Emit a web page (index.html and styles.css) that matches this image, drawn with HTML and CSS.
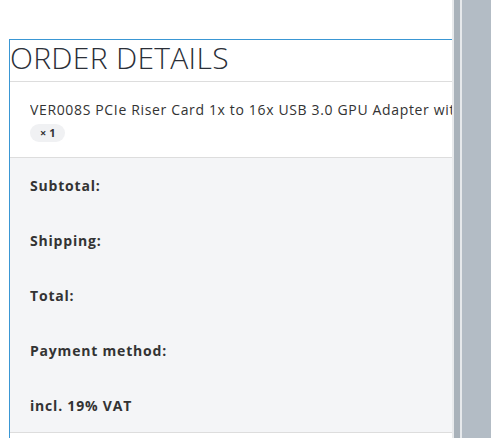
FILE: index.html
```html
<!DOCTYPE html>
<html>
<head>
<meta charset="utf-8">
<link rel="stylesheet" href="styles.css">
</head>
<body>
<div class="page">
  <div class="main">
    <section class="order">
      <h2 class="title">ORDER DETAILS</h2>
      <div class="item">
        <div class="item-name">VER008S PCIe Riser Card 1x to 16x USB 3.0 GPU Adapter with</div>
        <span class="qty">× 1</span>
      </div>
      <div class="totals">
        <div class="row">Subtotal:</div>
        <div class="row">Shipping:</div>
        <div class="row">Total:</div>
        <div class="row">Payment method:</div>
        <div class="row">incl. 19% VAT</div>
      </div>
    </section>
  </div>
  <div class="gutter">
    <div class="g1"></div>
    <div class="g2"></div>
    <div class="g3"></div>
    <div class="g4"></div>
  </div>
</div>
</body>
</html>
```
FILE: styles.css
```css
html, body {
  margin: 0;
  padding: 0;
  height: 100%;
  background: #fff;
}
body {
  font-family: "Open Sans", "DejaVu Sans", sans-serif;
  color: #333;
}
.page {
  display: flex;
  height: 438px;
  overflow: hidden;
}
.main {
  width: 452px;
  flex: none;
  padding: 39px 0 0 9px;
  box-sizing: border-box;
  overflow: hidden;
}
.order {
  border-top: 1px solid #3a97d4;
  border-left: 1px solid #3a97d4;
  height: 420px;
}
.title {
  margin: 0;
  height: 42px;
  box-sizing: border-box;
  padding-bottom: 7px;
  font-weight: 300;
  font-size: 30px;
  line-height: 35px;
  letter-spacing: 0.3px;
  color: #2b2f38;
  border-bottom: 1px solid #ddd;
  white-space: nowrap;
}
.item {
  height: 76px;
  box-sizing: border-box;
  padding: 18px 0 0 20px;
  border-bottom: 1px solid #ddd;
}
.item-name {
  font-size: 14px;
  line-height: 20px;
  letter-spacing: 0.65px;
  white-space: nowrap;
  overflow: hidden;
  color: #333;
}
.qty {
  display: inline-block;
  height: 18px;
  line-height: 18px;
  padding: 0 10px;
  border-radius: 9px;
  background: #f0f1f3;
  font-size: 11px;
  font-weight: 700;
  color: #333;
}
.totals {
  background: #f4f5f7;
  height: 275px;
  border-bottom: 1px solid #ddd;
  padding: 18px 0 0 20px;
  box-sizing: border-box;
}
.row {
  height: 55px;
  font-size: 14px;
  font-weight: 700;
  line-height: 20px;
  letter-spacing: 0.8px;
  color: #333;
}
.gutter {
  flex: 1;
  display: flex;
}
.g1 { width: 2px; background: #e8eaec; }
.g2 { width: 6px; background: #a9b2ba; }
.g3 { width: 2px; background: #e6e9ec; }
.g4 { flex: 1; background: #b3bcc5; }
```
